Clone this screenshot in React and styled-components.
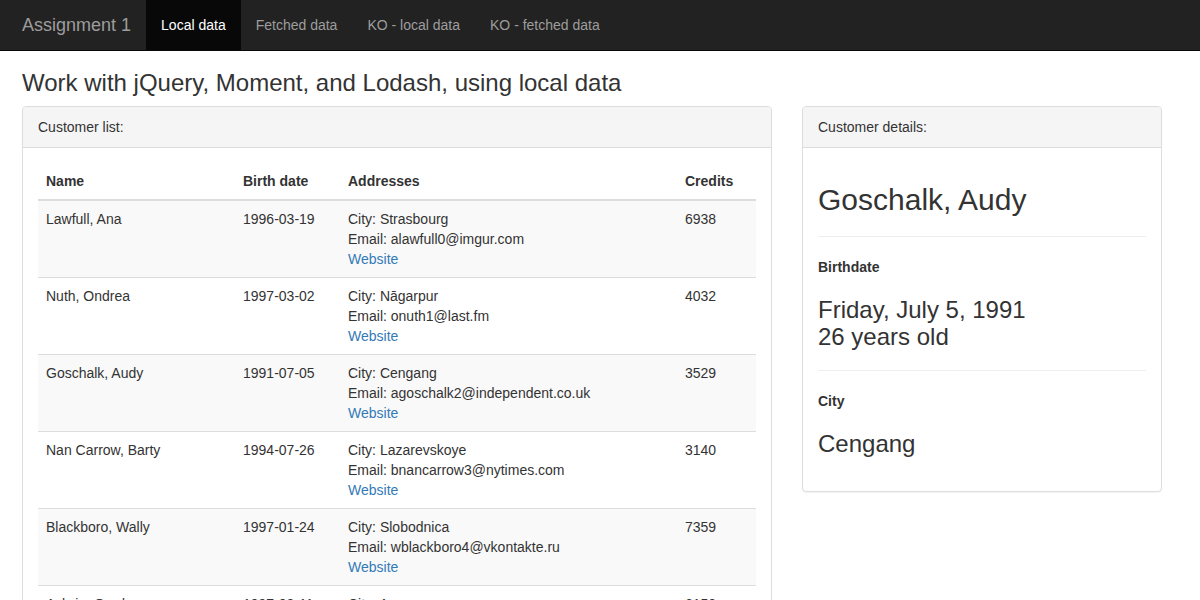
import React from "react";
import styled, { createGlobalStyle } from "styled-components";

const Global = createGlobalStyle`
  * { box-sizing: border-box; }
  body {
    margin: 0;
    font-family: "Liberation Sans", Arial, Helvetica, sans-serif;
    font-size: 14px;
    line-height: 1.42857;
    color: #333;
    background: #fff;
  }
`;

const Navbar = styled.nav`
  display: flex;
  align-items: flex-start;
  height: 51px;
  background: #222;
  border-bottom: 1px solid #080808;
  padding-left: 7px;
`;

const Brand = styled.a`
  display: block;
  height: 50px;
  padding: 15px 15px;
  font-size: 18px;
  line-height: 20px;
  color: #9d9d9d;
  text-decoration: none;
`;

const NavList = styled.ul`
  display: flex;
  margin: 0;
  padding: 0;
  list-style: none;
`;

const NavLink = styled.a`
  display: block;
  height: 50px;
  padding: 15px;
  font-size: 14px;
  line-height: 20px;
  color: ${(p) => (p.$active ? "#fff" : "#9d9d9d")};
  background: ${(p) => (p.$active ? "#080808" : "transparent")};
  text-decoration: none;
`;

const Page = styled.main`
  padding: 0 22px;
`;

const Title = styled.h3`
  margin: 19px 0 10px;
  font-size: 24px;
  font-weight: 500;
  line-height: 1.1;
`;

const Columns = styled.div`
  display: grid;
  grid-template-columns: 750px 360px;
  column-gap: 30px;
  align-items: start;
`;

const Panel = styled.section`
  border: 1px solid #ddd;
  border-radius: 4px;
  background: #fff;
  box-shadow: 0 1px 1px rgba(0, 0, 0, 0.05);
`;

const PanelHeading = styled.div`
  padding: 10px 15px;
  background: #f5f5f5;
  border-bottom: 1px solid #ddd;
  border-radius: 3px 3px 0 0;
  line-height: 20px;
`;

const PanelBody = styled.div`
  padding: ${(p) => p.$pad || "15px"};
`;

const Table = styled.table`
  width: 100%;
  border-collapse: collapse;
  border-spacing: 0;
`;

const Th = styled.th`
  text-align: left;
  padding: 8px;
  line-height: 20px;
  font-weight: bold;
  vertical-align: bottom;
  border-bottom: 2px solid #ddd;
  width: ${(p) => p.$w};
`;

const Tr = styled.tr`
  background: ${(p) => (p.$striped ? "#f9f9f9" : "transparent")};
`;

const Td = styled.td`
  padding: 8px;
  line-height: 20px;
  vertical-align: top;
  border-top: ${(p) => (p.$first ? "none" : "1px solid #ddd")};
`;

const Line = styled.div``;

const Link = styled.a`
  color: #337ab7;
  text-decoration: none;
`;

const BigName = styled.h2`
  margin: 20px 0 10px;
  font-size: 30px;
  font-weight: 500;
  line-height: 1.1;
`;

const Rule = styled.hr`
  margin: 20px 0;
  border: 0;
  border-top: 1px solid #eee;
`;

const Label = styled.h5`
  margin: 10px 0;
  font-size: 14px;
  font-weight: bold;
  line-height: 20px;
`;

const Value = styled.h3`
  margin: 20px 0 10px;
  font-size: 24px;
  font-weight: 500;
  line-height: 1.1;
`;

const customers = [
  { name: "Lawfull, Ana", birth: "1996-03-19", city: "Strasbourg", email: "alawfull0@imgur.com", credits: 6938 },
  { name: "Nuth, Ondrea", birth: "1997-03-02", city: "Nāgarpur", email: "onuth1@last.fm", credits: 4032 },
  { name: "Goschalk, Audy", birth: "1991-07-05", city: "Cengang", email: "agoschalk2@independent.co.uk", credits: 3529 },
  { name: "Nan Carrow, Barty", birth: "1994-07-26", city: "Lazarevskoye", email: "bnancarrow3@nytimes.com", credits: 3140 },
  { name: "Blackboro, Wally", birth: "1997-01-24", city: "Slobodnica", email: "wblackboro4@vkontakte.ru", credits: 7359 },
  { name: "Aylwin, Gordon", birth: "1997-08-11", city: "Anyuan", email: "gaylwin5@google.com", credits: 6150 },
];

export default function App() {
  return (
    <>
      <Global />
      <Navbar>
        <Brand href="#">Assignment 1</Brand>
        <NavList>
          <li><NavLink href="#" $active>Local data</NavLink></li>
          <li><NavLink href="#">Fetched data</NavLink></li>
          <li><NavLink href="#">KO - local data</NavLink></li>
          <li><NavLink href="#">KO - fetched data</NavLink></li>
        </NavList>
      </Navbar>
      <Page>
        <Title>Work with jQuery, Moment, and Lodash, using local data</Title>
        <Columns>
          <Panel>
            <PanelHeading>Customer list:</PanelHeading>
            <PanelBody>
              <Table>
                <thead>
                  <tr>
                    <Th $w="197px">Name</Th>
                    <Th $w="105px">Birth date</Th>
                    <Th $w="337px">Addresses</Th>
                    <Th>Credits</Th>
                  </tr>
                </thead>
                <tbody>
                  {customers.map((c, i) => (
                    <Tr key={c.name} $striped={i % 2 === 0}>
                      <Td $first={i === 0}>{c.name}</Td>
                      <Td $first={i === 0}>{c.birth}</Td>
                      <Td $first={i === 0}>
                        <Line>City: {c.city}</Line>
                        <Line>Email: {c.email}</Line>
                        <Line><Link href="#">Website</Link></Line>
                      </Td>
                      <Td $first={i === 0}>{c.credits}</Td>
                    </Tr>
                  ))}
                </tbody>
              </Table>
            </PanelBody>
          </Panel>
          <Panel>
            <PanelHeading>Customer details:</PanelHeading>
            <PanelBody $pad="15px 15px 23px">
              <BigName>Goschalk, Audy</BigName>
              <Rule />
              <Label>Birthdate</Label>
              <Value>
                Friday, July 5, 1991
                <br />
                26 years old
              </Value>
              <Rule />
              <Label>City</Label>
              <Value>Cengang</Value>
            </PanelBody>
          </Panel>
        </Columns>
      </Page>
    </>
  );
}
